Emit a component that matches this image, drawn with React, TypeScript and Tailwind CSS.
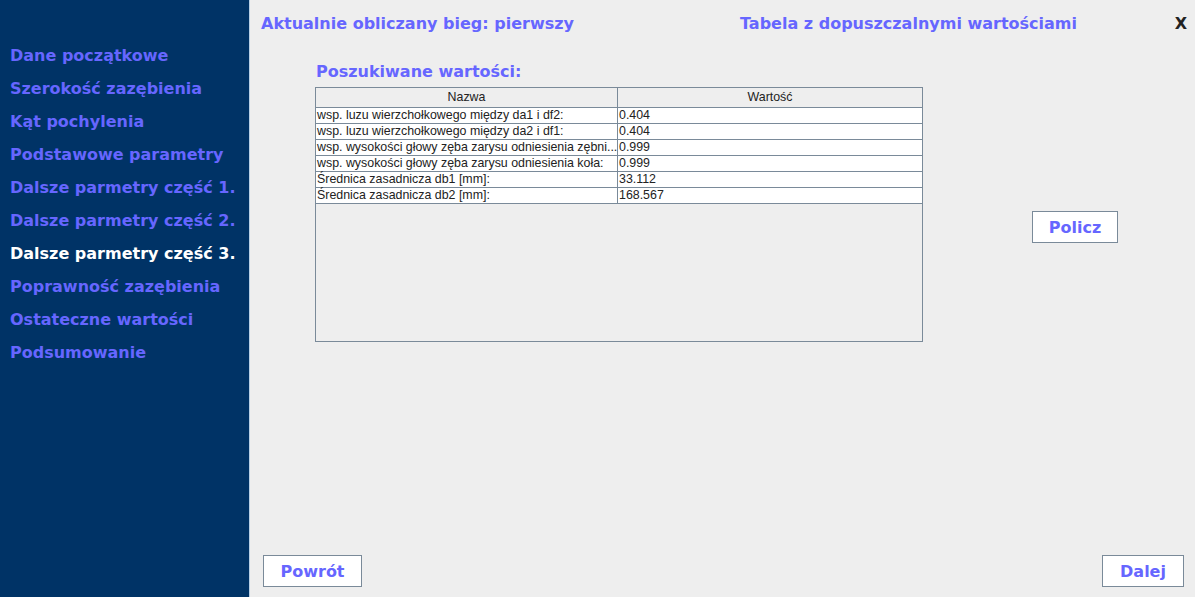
import React from 'react';

const menu = [
  'Dane początkowe',
  'Szerokość zazębienia',
  'Kąt pochylenia',
  'Podstawowe parametry',
  'Dalsze parmetry część 1.',
  'Dalsze parmetry część 2.',
  'Dalsze parmetry część 3.',
  'Poprawność zazębienia',
  'Ostateczne wartości',
  'Podsumowanie',
];

const rows: [string, string][] = [
  ['wsp. luzu wierzchołkowego między da1 i df2:', '0.404'],
  ['wsp. luzu wierzchołkowego między da2 i df1:', '0.404'],
  ['wsp. wysokości głowy zęba zarysu odniesienia zębni...', '0.999'],
  ['wsp. wysokości głowy zęba zarysu odniesienia koła:', '0.999'],
  ['Średnica zasadnicza db1 [mm]:', '33.112'],
  ['Średnica zasadnicza db2 [mm]:', '168.567'],
];

const bold = "font-['DejaVu_Sans',sans-serif] font-bold";

function Button({ label, className }: { label: string; className?: string }) {
  return (
    <button
      className={`h-[32px] border border-[#7a8a99] bg-white pt-[2px] text-[16px] text-[#6666ff] ${bold} ${className ?? ''}`}
    >
      {label}
    </button>
  );
}

export default function App() {
  return (
    <div className="flex h-[597px] w-[1195px] overflow-hidden bg-[#eeeeee]">
      {/* side menu */}
      <div className="flex w-[249px] shrink-0 flex-col bg-[#003366] pt-[43px] pl-[10px]">
        {menu.map((m, i) => (
          <div
            key={m}
            className={`h-[33px] whitespace-nowrap leading-[26px] text-[16px] ${bold} ${i === 6 ? 'text-white' : 'text-[#6666ff]'}`}
          >
            {m}
          </div>
        ))}
      </div>

      <div className="flex flex-1 flex-col border-l border-[#b8cfe5]">
        {/* header */}
        <div className={`flex h-[46px] items-center pt-[2px] text-[16px] ${bold}`}>
          <div className="w-[490px] pl-[11px] text-[#6666ff]">Aktualnie obliczany bieg: pierwszy</div>
          <div className="flex-1 text-[#6666ff]">Tabela z dopuszczalnymi wartościami</div>
          <div className="pr-[8px] text-[#222222]">X</div>
        </div>

        <div className="flex flex-1">
          <div className="flex flex-col pl-[65px]">
            <div className={`h-[41px] pt-[14px] pl-[1px] text-[16px] text-[#6666ff] ${bold}`}>Poszukiwane wartości:</div>
            <div className="h-[255px] w-[608px] border border-[#7a8a99] font-['Liberation_Sans',Arial,sans-serif] text-[12.4px] text-[#222222]">
              <div className="flex h-[20px] border-b border-[#7a8a99] bg-[#eeeeee]">
                <div className="w-[302px] border-r border-[#7a8a99] text-center leading-[19px]">Nazwa</div>
                <div className="flex-1 text-center leading-[19px]">Wartość</div>
              </div>
              {rows.map(([n, v]) => (
                <div key={n} className="flex h-[16px] border-b border-[#7a8a99] bg-white">
                  <div className="w-[302px] whitespace-nowrap border-r border-[#7a8a99] pl-[1px] leading-[15px]">{n}</div>
                  <div className="flex-1 pl-[1px] leading-[15px]">{v}</div>
                </div>
              ))}
            </div>
          </div>
          <div className="flex-1 pt-[165px] pl-[109px]">
            <Button label="Policz" className="w-[86px]" />
          </div>
        </div>

        {/* footer */}
        <div className="flex justify-between pr-[11px] pb-[10px] pl-[13px]">
          <Button label="Powrót" className="w-[99px]" />
          <Button label="Dalej" className="w-[82px]" />
        </div>
      </div>
    </div>
  );
}
